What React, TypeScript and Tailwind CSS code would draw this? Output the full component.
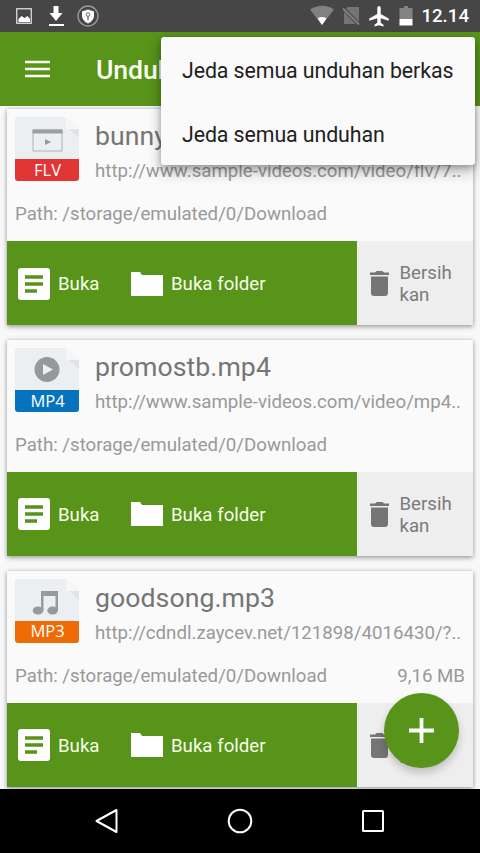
import type { ReactNode } from "react";

type Item = {
  kind: "FLV" | "MP4" | "MP3";
  name: string;
  url: string;
  size?: string;
};

const items: Item[] = [
  { kind: "FLV", name: "bunny.flv", url: "http://www.sample-videos.com/video/flv/7.." },
  { kind: "MP4", name: "promostb.mp4", url: "http://www.sample-videos.com/video/mp4.." },
  { kind: "MP3", name: "goodsong.mp3", url: "http://cdndl.zaycev.net/121898/4016430/?..", size: "9,16 MB" },
];

const labelColor = { FLV: "bg-[#e23636]", MP4: "bg-[#0873bd]", MP3: "bg-[#ee6b05]" };

const glyphs: Record<Item["kind"], ReactNode> = {
  FLV: (
    <g>
      <path d="M18 13h29v21H18z" fill="none" stroke="#aeb2b4" />
      <path d="M17.500 12.500h30v4h-30z" fill="#9b9fa1" />
      <path d="M30 22l6 3-6 3z" fill="#969a9c" />
    </g>
  ),
  MP4: (
    <g>
      <circle cx="32" cy="21.500" r="12.500" fill="#969899" />
      <path d="M28 16l10 5.500-10 5.500z" fill="#eceff1" />
    </g>
  ),
  MP3: (
    <g fill="#969a9c">
      <path d="M26 12h17v20h-2.500V17h-12v14.500H26z" />
      <ellipse cx="23" cy="31.500" rx="5.300" ry="4" />
      <ellipse cx="37.600" cy="31.500" rx="5.300" ry="4" />
    </g>
  ),
};

function FileIcon({ kind }: { kind: Item["kind"] }) {
  return (
    <div className="h-16 w-16 shrink-0">
      <svg className="block" width="64" height="42" viewBox="0 0 64 42">
        <path d="M2 0H51l13 12v30H0V2q0-2 2-2z" fill="#ebeff2" />
        <path d="M51 0l13 12H53q-2 0-2-2z" fill="#f4f6f7" />
        <path d="M54 12h10v9z" fill="#dfe4e8" />
        {glyphs[kind]}
      </svg>
      <div
        className={`flex h-[22px] items-center justify-center rounded-b-[3px] pl-[1px] font-['Open_Sans','Noto_Sans',sans-serif] text-[16.500px] font-medium leading-none text-white ${labelColor[kind]}`}
      >
        {kind}
      </div>
    </div>
  );
}

function Card({ item }: { item: Item }) {
  return (
    <article className="h-[216px] shrink-0 bg-[#fafafa] shadow-[0_2px_5px_rgba(0,0,0,0.3),0_0_4px_rgba(0,0,0,0.16)]">
      <div className="flex h-[132px] flex-col px-2 pt-2">
        <div className="flex gap-4">
          <FileIcon kind={item.kind} />
          <div className="whitespace-nowrap">
            <h2 className="mt-[3px] text-[26.670px] leading-8 tracking-[0.05px] text-[#757575]">{item.name}</h2>
            <p className="mt-2 text-[18.670px] leading-[22px] text-[#999]">{item.url}</p>
          </div>
        </div>
        <div className="mt-[21px] flex justify-between whitespace-nowrap text-[18.670px] leading-[22px] text-[#999]">
          <span>Path: /storage/emulated/0/Download</span>
          <span>{item.size}</span>
        </div>
      </div>
      <div className="flex h-[84px] text-[18.670px]">
        <div className="flex w-[349.500px] items-center bg-[#58931a] pl-[11px] pt-[1px] text-[#f5ffe9]">
          <svg width="32" height="32" viewBox="0 0 32 32">
            <rect width="32" height="32" rx="3" fill="#fff" />
            <path d="M7 9h18M7 16h18M7 23h12" stroke="#58931a" strokeWidth="3.400" />
          </svg>
          <span className="ml-2 w-[73px] pt-px">Buka</span>
          <svg width="32" height="24" viewBox="0 0 32 24">
            <path d="M0 0h9l2 3h21v21H0z" fill="#fff" />
          </svg>
          <span className="ml-2 pt-px">Buka folder</span>
        </div>
        <div className="flex flex-1 items-center bg-[#eee] pl-[13px] pt-[1px] text-[#7b7b7b]">
          <svg width="19" height="25" viewBox="0 0 19 25">
            <path d="M0 1.500h5L6.500 0h6L14 1.500h5V4H0zM1 5.500h17V22q0 3-3 3H4q-3 0-3-3z" fill="#757575" />
          </svg>
          <span className="ml-[11px] pt-px leading-[22px]">Bersih<br />kan</span>
        </div>
      </div>
    </article>
  );
}

function StatusBar() {
  return (
    <header className="flex h-8 shrink-0 items-center justify-between bg-[#464646] pl-4 pr-[11px] text-white">
      <svg width="84" height="26" viewBox="0 0 84 26">
        <rect x=".75" y="5.750" width="14.500" height="14.500" fill="none" stroke="#ddd" strokeWidth="1.300" />
        <path d="M2.500 19v-3l3-3 3 2 3-2 2.500 3v3z" fill="#fff" />
        <path d="M37.500 3h5v7h4l-6.500 8-6.500-8h4zM33 21h15v2H33z" fill="#fff" />
        <circle cx="72" cy="13" r="10" fill="none" stroke="#999" strokeWidth="1.400" />
        <path d="M72 6.500l6 2v4q0 5-6 8-6-3-6-8v-4z" fill="#fff" />
        <circle cx="72" cy="11.500" r="1.800" fill="none" stroke="#666" />
        <path d="M72 13v4" stroke="#666" strokeWidth="1.300" />
      </svg>
      <div className="flex items-center gap-[3px]">
        <svg width="108" height="26" viewBox="0 0 108 26">
          <path d="M0 6.500Q12.500-1 24 6.500L12 22z" fill="#818181" />
          <path d="M7.500 15.500q4.500-2.800 9 0L12 22z" fill="#fff" />
          <path d="M38 4h11v15L35.500 5.500zM34 8l14 13H34z" fill="#747474" />
          <path d="M33 5l16 17" stroke="#464646" strokeWidth="4" />
          <path d="M33 5.500l16 16" stroke="#828282" strokeWidth="2" />
          <path d="M69 3q1.700 0 1.700 2v6l8 4.500v2.300l-8-2.600v4.500l2.800 2v1.800L69 22.200l-4.500 1.300v-1.800l2.800-2v-4.500l-8 2.600v-2.300l8-4.500V5q0-2 1.700-2z" fill="#fff" />
          <path d="M94 3h4v2h4.500v11h-13V5H94z" fill="#838383" />
          <path d="M89.500 16h13v6.500h-13z" fill="#fff" />
        </svg>
        <span className="mt-px text-[18.670px] font-medium leading-none">12.14</span>
      </div>
    </header>
  );
}

export default function App() {
  return (
    <div className="relative flex h-[853px] w-[480px] flex-col overflow-hidden bg-[#f8f8f8] font-[Roboto,'Liberation_Sans',sans-serif]">
      <StatusBar />
      <div className="flex h-[74px] shrink-0 items-center bg-[#58931a] pl-[25px] text-[#fbfff2]">
        <svg width="26" height="18" viewBox="0 0 26 18">
          <path d="M0 2h25M0 9h25M0 16h25" stroke="currentColor" strokeWidth="2.600" />
        </svg>
        <h1 className="ml-[45px] mt-[2px] text-[26.670px] font-medium tracking-[-0.1px]">Unduhan</h1>
      </div>

      <main className="flex h-[683px] shrink-0 flex-col gap-[14.670px] overflow-hidden px-[7px] pt-[3.200px]">
        {items.map((item) => (
          <Card key={item.name} item={item} />
        ))}
      </main>

      <nav className="flex h-16 shrink-0 items-center justify-center gap-[108px] bg-black">
        <svg width="24" height="26" viewBox="0 0 24 26">
          <path d="M1.500 13L21.500 2v22z" fill="none" stroke="#fff" strokeWidth="2" strokeLinejoin="round" />
        </svg>
        <svg width="26" height="26" viewBox="0 0 26 26">
          <circle cx="13" cy="13" r="11.300" fill="none" stroke="#fff" strokeWidth="2" />
        </svg>
        <svg width="24" height="26" viewBox="0 0 24 26">
          <rect x="2" y="3" width="20" height="20" rx=".5" fill="none" stroke="#fff" strokeWidth="2" />
        </svg>
      </nav>

      <div className="absolute left-[161px] top-[37px] flex h-32 w-[314px] flex-col rounded-[3px] bg-[#fafafa] text-[21.330px] tracking-[-0.080px] text-[#212121] shadow-[0_7px_14px_rgba(0,0,0,0.25),0_2px_6px_rgba(0,0,0,0.25)]">
        <div className="flex h-16 items-center whitespace-nowrap pl-[21px] pt-[3px]">Jeda semua unduhan berkas</div>
        <div className="flex h-16 items-center whitespace-nowrap pl-[21px] pt-[3px]">Jeda semua unduhan</div>
      </div>

      <button className="absolute left-[384px] top-[693px] flex h-[75px] w-[75px] items-center justify-center rounded-full bg-[#58931a] shadow-[0_5px_8px_rgba(0,0,0,0.2)]">
        <svg width="25" height="25" viewBox="0 0 25 25">
          <path d="M12.500 0v25M0 12.500h25" stroke="#fff" strokeWidth="3.800" />
        </svg>
      </button>
    </div>
  );
}
